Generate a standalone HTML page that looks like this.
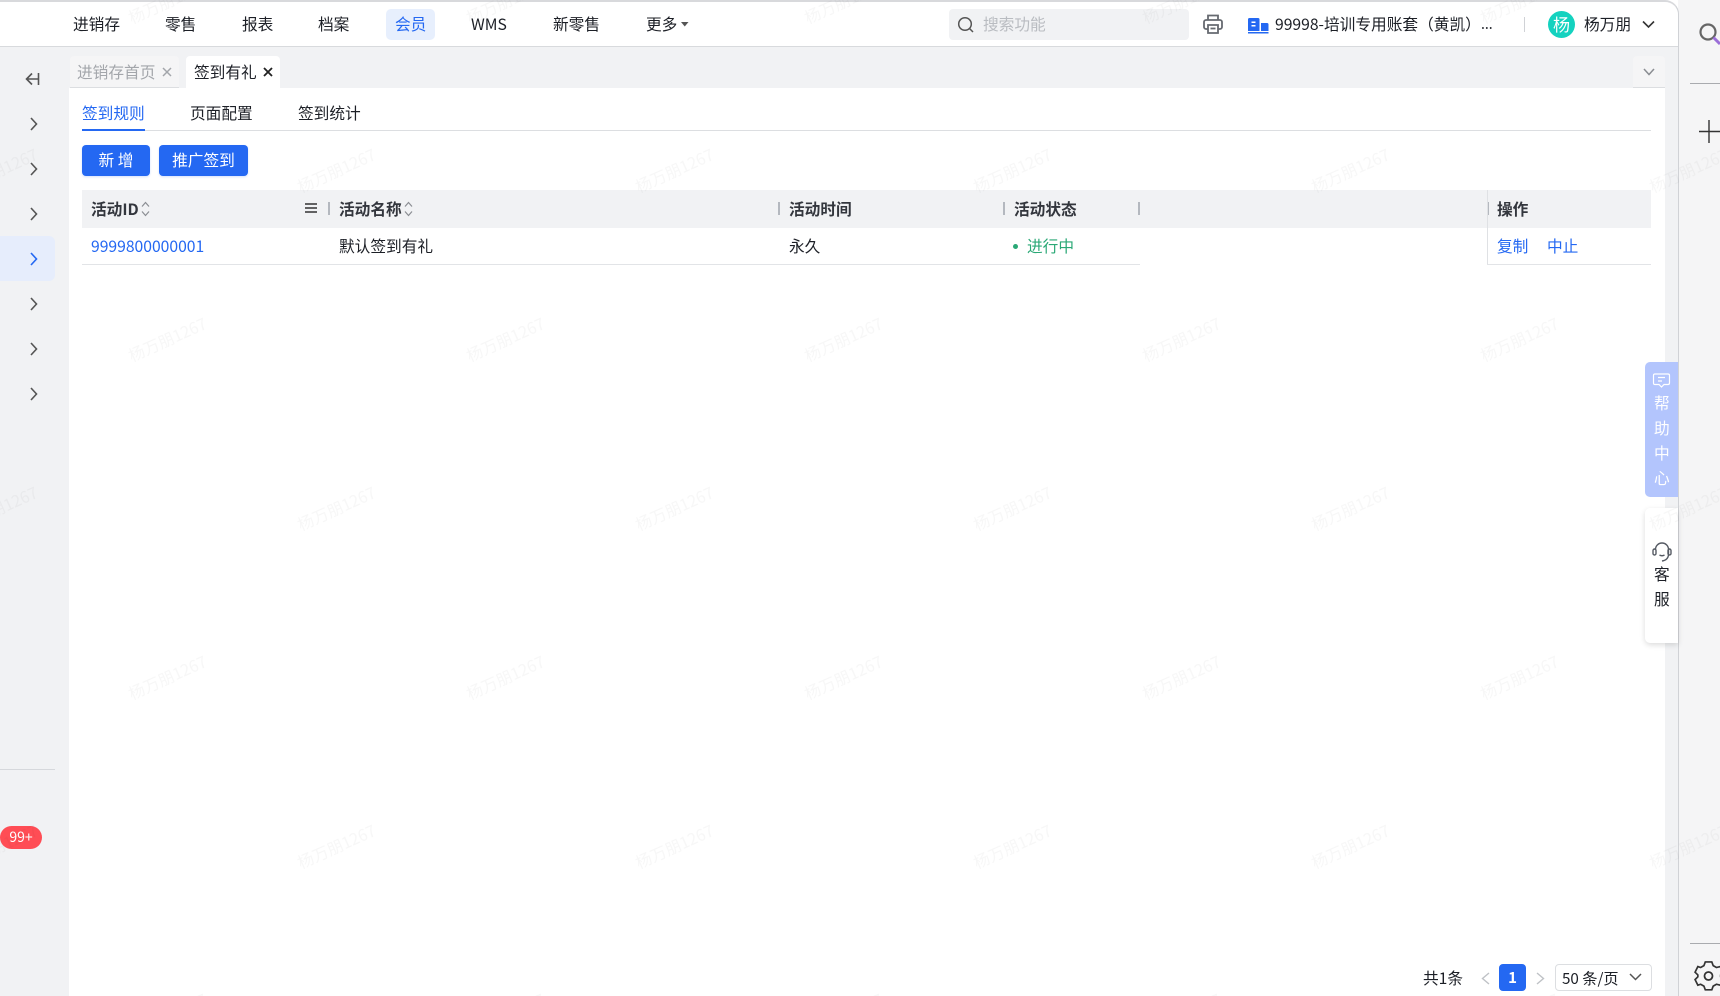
<!DOCTYPE html>
<html lang="zh-CN">
<head>
<meta charset="utf-8">
<title>签到有礼</title>
<style>
html,body{margin:0;padding:0;width:1720px;height:996px;overflow:hidden;background:#fff}
body{position:relative;font-family:"Noto Sans CJK SC","Liberation Sans",sans-serif;font-size:15.7px;color:#1c1f26}
.a{position:absolute}
.t{position:absolute;line-height:20px;height:20px;white-space:nowrap}
.blue{color:#2468f2}
.b{font-weight:700;color:#33363d}
.sep{position:absolute;width:2px;height:13px;background:#b4b8bf;top:202px}
svg{position:absolute;overflow:visible}
</style>
</head>
<body>
<!-- right rail -->
<div class="a" style="left:1678px;top:0;width:42px;height:996px;background:#f5f5f6"></div>
<!-- frame -->
<div class="a" style="left:0;top:0;width:1678px;background:#f1f2f4;border-right:1.5px solid #d0d2d6;border-top:2px solid #d8d9dc;border-top-right-radius:14px;box-sizing:content-box;height:994px"></div>
<!-- header -->
<div class="a" style="left:0;top:2px;width:1678px;height:43.500px;background:#fff;border-bottom:1.5px solid #d8dadd;border-top-right-radius:13px"></div>
<div class="a" style="left:386px;top:9px;width:49px;height:31px;background:#e7effd;border-radius:5px"></div>
<div class="t" style="left:73px;top:14px">进销存</div>
<div class="t" style="left:165px;top:14px">零售</div>
<div class="t" style="left:242px;top:14px">报表</div>
<div class="t" style="left:318px;top:14px">档案</div>
<div class="t blue" style="left:395px;top:14px">会员</div>
<div class="t" style="left:471px;top:14px">WMS</div>
<div class="t" style="left:553px;top:14px">新零售</div>
<div class="t" style="left:646px;top:14px">更多</div>
<svg style="left:681px;top:22px" width="8" height="5"><path d="M0 0H7.5L3.75 4.5Z" fill="#555"/></svg>

<div class="a" style="left:949px;top:9px;width:240px;height:31px;background:#f1f2f4;border-radius:4px"></div>
<svg style="left:957px;top:16px" width="18" height="18" fill="none" stroke="#555" stroke-width="1.5"><circle cx="8" cy="8" r="6.3"/><path d="M12.5 12.5L16 16"/></svg>
<div class="t" style="left:983px;top:14px;color:#b9bcc1">搜索功能</div>
<svg style="left:1203px;top:14px" width="20" height="20" fill="none" stroke="#666a70" stroke-width="1.8"><path d="M5 6V1.5H15V6"/><rect x="1" y="6" width="18" height="9" rx="2"/><path d="M5 11H15V19H5Z" fill="#fff"/><path d="M7.5 14.5H12.5"/></svg>
<svg style="left:1248px;top:18px" width="21" height="16"><path d="M0 13V1.5Q0 0 1.5 0H10Q11.500 0 11.500 1.500V13Z" fill="#2468f2"/><path d="M13 5H19Q20.500 5 20.500 6.500V13H13Z" fill="#2468f2"/><rect x="3.500" y="3.500" width="4" height="1.500" fill="#fff"/><rect x="3.500" y="7" width="4" height="1.500" fill="#fff"/><rect x="0" y="14" width="20.500" height="1.500" fill="#2468f2"/></svg>
<div class="t" style="left:1275px;top:14px;font-size:15.7px">99998-培训专用账套（黄凯）</div>
<div class="t" style="left:1481px;top:14px;font-size:14px">...</div>
<div class="a" style="left:1524px;top:17px;width:1px;height:15px;background:#d0d2d6"></div>
<div class="a" style="left:1548px;top:11px;width:27px;height:27px;border-radius:50%;background:#14d2bf;color:#fff;text-align:center;line-height:26px;font-size:17px">杨</div>
<div class="t" style="left:1584px;top:14px">杨万朋</div>
<svg style="left:1642px;top:20px" width="13" height="9" fill="none" stroke="#333" stroke-width="1.6"><path d="M1 1.500L6.500 7L12 1.500"/></svg>

<!-- right rail icons -->
<svg style="left:1699px;top:23px" width="21" height="21" fill="none"><circle cx="9" cy="9" r="7.500" stroke="#666" stroke-width="2.200"/><path d="M14.500 14.500L21 21" stroke="#9b6fd8" stroke-width="3"/></svg>
<div class="a" style="left:1690px;top:83px;width:30px;height:1px;background:#a9abaf"></div>
<svg style="left:1699px;top:120px" width="21" height="23" stroke="#333" stroke-width="1.400"><path d="M0 11.500H21M10 0V23"/></svg>
<div class="a" style="left:1690px;top:943px;width:30px;height:1px;background:#a9abaf"></div>
<svg style="left:1696px;top:962px" width="24" height="30" fill="none" stroke="#333" stroke-width="1.800"><path d="M10 1H17L18.500 5L22 7L26 6L29.500 12L26.500 15L26.500 17L29.500 20L26 26L22 25L18.500 27L17 31H10L8.500 27L5 25L2 26L-1 20L2 17V15L-1 12L2 6L5 7L8.500 5Z" transform="translate(0,-1) scale(.93)"/><circle cx="12.500" cy="14" r="4"/></svg>

<!-- sidebar -->
<svg style="left:25px;top:72px" width="15" height="14" fill="none" stroke="#555" stroke-width="1.600"><path d="M7 1.500L1.500 7L7 12.500M1.500 7H13M13.500 1V13"/></svg>
<div class="a" style="left:0;top:236px;width:55px;height:45px;background:#e6edfc;border-radius:0 6px 6px 0"></div>
<svg style="left:30px;top:117px" width="8" height="290" fill="none" stroke="#555" stroke-width="1.600">
<path d="M1 1L6.500 7L1 13"/><path d="M1 46L6.500 52L1 58"/><path d="M1 91L6.500 97L1 103"/><path d="M1 136L6.500 142L1 148" stroke="#2468f2"/><path d="M1 181L6.500 187L1 193"/><path d="M1 226L6.500 232L1 238"/><path d="M1 271L6.500 277L1 283"/></svg>
<div class="a" style="left:0;top:769px;width:55px;height:1px;background:#d6d8dc"></div>
<div class="a" style="left:0;top:826px;width:42px;height:23px;background:#ff4d55;border-radius:12px;color:#fff;text-align:center;line-height:23px;font-size:14px">99+</div>

<!-- tabs -->
<div class="a" style="left:70px;top:56px;width:109px;height:31px;background:#f5f5f6;border-bottom:1px solid #dcdee1;border-radius:4px 4px 0 0"></div>
<div class="t" style="left:77px;top:62px;color:#a3a6ab">进销存首页</div>
<svg style="left:162px;top:67px" width="10" height="10" stroke="#a3a6ab" stroke-width="1.500"><path d="M1 1L9 9M9 1L1 9"/></svg>
<div class="a" style="left:186px;top:56px;width:94px;height:32px;background:#fff;border-radius:4px 4px 0 0"></div>
<div class="t" style="left:194px;top:62px">签到有礼</div>
<svg style="left:263px;top:67px" width="10" height="10" stroke="#222" stroke-width="1.800"><path d="M1 1L9 9M9 1L1 9"/></svg>
<div class="a" style="left:1633px;top:56px;width:32px;height:31px;background:#f5f5f6;border-bottom:1px solid #dcdee1;border-radius:4px 4px 0 0"></div>
<svg style="left:1643px;top:68px" width="12" height="8" fill="none" stroke="#8a8d92" stroke-width="1.500"><path d="M1 1L6 6.500L11 1"/></svg>

<!-- main -->
<div class="a" style="left:69px;top:88px;width:1596px;height:908px;background:#fff"></div>
<div class="t blue" style="left:82px;top:103px">签到规则</div>
<div class="t" style="left:190px;top:103px">页面配置</div>
<div class="t" style="left:298px;top:103px">签到统计</div>
<div class="a" style="left:82px;top:130px;width:1569px;height:1px;background:#dcdee1"></div>
<div class="a" style="left:82px;top:129px;width:63px;height:2px;background:#2468f2"></div>

<div class="a" style="left:82px;top:145px;width:68px;height:31px;background:#2468f2;border-radius:4px;color:#fff;text-align:center;line-height:30px;box-shadow:0 1px 2px rgba(36,104,242,.2)">新 增</div>
<div class="a" style="left:159px;top:145px;width:89px;height:31px;background:#2468f2;border-radius:4px;color:#fff;text-align:center;line-height:30px;box-shadow:0 1px 2px rgba(36,104,242,.2)">推广签到</div>

<!-- table -->
<div class="a" style="left:82px;top:190px;width:1569px;height:38px;background:#f1f2f4"></div>
<div class="t b" style="left:91px;top:199px">活动ID</div>
<svg style="left:141px;top:201px" width="9" height="16" fill="none" stroke="#8a8d92" stroke-width="1.200"><path d="M1 5.500L4.500 1.500L8 5.500M1 10.500L4.500 14.500L8 10.500"/></svg>
<svg style="left:305px;top:203px" width="12" height="10" stroke="#333" stroke-width="1.500"><path d="M0 1H12M0 5H12M0 9H12"/></svg>
<div class="sep" style="left:328px"></div>
<div class="t b" style="left:339px;top:199px">活动名称</div>
<svg style="left:404px;top:201px" width="9" height="16" fill="none" stroke="#8a8d92" stroke-width="1.200"><path d="M1 5.500L4.500 1.500L8 5.500M1 10.500L4.500 14.500L8 10.500"/></svg>
<div class="sep" style="left:778px"></div>
<div class="t b" style="left:789px;top:199px">活动时间</div>
<div class="sep" style="left:1003px"></div>
<div class="t b" style="left:1014px;top:199px">活动状态</div>
<div class="sep" style="left:1138px"></div>
<div class="a" style="left:1487px;top:190px;width:1px;height:75px;background:#dfe1e4"></div>
<div class="sep" style="left:1488px;width:1px"></div>
<div class="t b" style="left:1497px;top:199px">操作</div>

<div class="t blue" style="left:91px;top:236px">9999800000001</div>
<div class="t" style="left:339px;top:236px">默认签到有礼</div>
<div class="t" style="left:789px;top:236px">永久</div>
<div class="a" style="left:1013px;top:244px;width:5px;height:5px;border-radius:50%;background:#2aa876"></div>
<div class="t" style="left:1027px;top:236px;color:#2aa876">进行中</div>
<div class="t blue" style="left:1497px;top:236px">复制</div>
<div class="t blue" style="left:1547px;top:236px">中止</div>
<div class="a" style="left:82px;top:264px;width:1058px;height:1px;background:#e2e4e7"></div>
<div class="a" style="left:1487px;top:264px;width:164px;height:1px;background:#e2e4e7"></div>

<!-- pagination -->
<div class="t" style="left:1423px;top:968px">共1条</div>
<svg style="left:1481px;top:972px" width="9" height="13" fill="none" stroke="#bfc2c6" stroke-width="1.400"><path d="M8 1L1.500 6.500L8 12"/></svg>
<div class="a" style="left:1499px;top:964px;width:27px;height:27px;background:#2468f2;border-radius:4px;color:#fff;text-align:center;line-height:27px;font-size:15px;font-weight:700">1</div>
<svg style="left:1536px;top:972px" width="9" height="13" fill="none" stroke="#bfc2c6" stroke-width="1.400"><path d="M1 1L7.500 6.500L1 12"/></svg>
<div class="a" style="left:1555px;top:964px;width:95px;height:25px;border:1px solid #dcdee1;border-radius:4px"></div>
<div class="t" style="left:1562px;top:968px;font-size:15.2px">50 条/页</div>
<svg style="left:1629px;top:973px" width="13" height="8" fill="none" stroke="#555" stroke-width="1.500"><path d="M1 1L6.500 6.500L12 1"/></svg>

<!-- floating -->
<div class="a" style="left:1645px;top:362px;width:33px;height:135px;background:#b3c5fd;border-radius:5px 0 0 5px"></div>
<svg style="left:1653px;top:373px" width="18" height="15" fill="none" stroke="#fff" stroke-width="1.200"><path d="M2 1H15Q16.500 1 16.500 2.500V10Q16.500 11.500 15 11.500H11L8.500 14L6 11.500H2Q.5 11.500 .5 10V2.500Q.5 1 2 1Z"/><path d="M5 4.500H12M5 8H9"/></svg>
<div class="t" style="left:1654px;top:393px;color:#fff">帮</div>
<div class="t" style="left:1654px;top:418px;color:#fff">助</div>
<div class="t" style="left:1654px;top:443px;color:#fff">中</div>
<div class="t" style="left:1654px;top:468px;color:#fff">心</div>
<div class="a" style="left:1645px;top:508px;width:33px;height:135px;background:#fff;border-radius:5px 0 0 5px;box-shadow:0 2px 6px rgba(0,0,0,.14)"></div>
<svg style="left:1652px;top:542px" width="20" height="20" fill="none" stroke="#555a63" stroke-width="1.400"><path d="M3.500 8V7.500A6.500 6.500 0 0 1 16.500 7.500V12Q16.500 18 10 19"/><rect x="1" y="7" width="3" height="6" rx="1.500"/><rect x="16" y="7" width="3" height="6" rx="1.500"/><path d="M7.500 13Q10 14.500 12.500 13"/></svg>
<div class="t" style="left:1654px;top:564px">客</div>
<div class="t" style="left:1654px;top:589px">服</div>

<!-- watermark -->
<svg style="left:0;top:0;pointer-events:none" width="1720" height="996">
<defs>
<pattern id="wm" patternUnits="userSpaceOnUse" x="1" y="7" width="338" height="338">
<g font-family="Noto Sans CJK SC, Liberation Sans, sans-serif" font-size="16" fill="#000" fill-opacity=".032" text-anchor="middle">
<text transform="translate(169,0) rotate(-24)">杨万朋1267</text>
<text transform="translate(169,338) rotate(-24)">杨万朋1267</text>
<text transform="translate(0,169) rotate(-24)">杨万朋1267</text>
<text transform="translate(338,169) rotate(-24)">杨万朋1267</text>
</g>
</pattern>
</defs>
<rect width="1720" height="996" fill="url(#wm)"/>
</svg>
</body>
</html>
